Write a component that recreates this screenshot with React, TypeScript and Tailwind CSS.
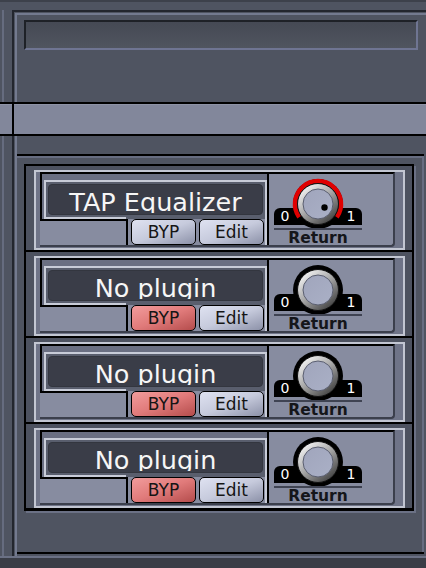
import React from 'react';

// ─── Data ───────────────────────────────────────────────────────────────────────

type Slot = { name: string; bypassed: boolean; active: boolean };

const SLOTS: Slot[] = [
  { name: 'TAP Equalizer', bypassed: false, active: true },
  { name: 'No plugin', bypassed: true, active: false },
  { name: 'No plugin', bypassed: true, active: false },
  { name: 'No plugin', bypassed: true, active: false },
];

// ─── Knob ───────────────────────────────────────────────────────────────────────

function Knob({ active }: { active: boolean }) {
  // value arc from -125deg to +125deg around (44, 26)
  const arc = 'M25.16 39.19 A23 23 0 1 1 62.84 39.19';
  return (
    <svg width="88" height="52" viewBox="0 0 88 52" className="block">
      <defs>
        <linearGradient id="knobRing" x1="0.15" y1="0.1" x2="0.85" y2="0.95">
          <stop offset="0" stopColor="#f2f2f2" />
          <stop offset="0.45" stopColor="#a9a9a9" />
          <stop offset="1" stopColor="#3c3c3c" />
        </linearGradient>
        <linearGradient id="knobFace" x1="0" y1="0" x2="1" y2="1">
          <stop offset="0" stopColor="#a0a5bc" />
          <stop offset="1" stopColor="#aab0c6" />
        </linearGradient>
      </defs>
      <path d="M0 36 a6 6 0 0 1 6 -6 H82 a6 6 0 0 1 6 6 V47 H0 Z" fill="#000" />
      <circle cx="44" cy="26" r="25" fill="#000" />
      {active && <path d={arc} stroke="#e00000" strokeWidth="4.5" fill="none" />}
      <circle cx="44" cy="26" r="20.5" fill="url(#knobRing)" stroke="#111" strokeWidth="1" />
      <circle cx="44" cy="26" r="15" fill="url(#knobFace)" stroke="#5b5f70" strokeWidth="1" />
      {active && <circle cx="50.5" cy="29.5" r="3.2" fill="#000" />}
      <text x="11" y="43" fill="#fff" fontSize="14" textAnchor="middle" fontFamily="DejaVu Sans">0</text>
      <text x="77" y="43" fill="#fff" fontSize="14" textAnchor="middle" fontFamily="DejaVu Sans">1</text>
      <rect x="0" y="50" width="88" height="2" fill="#3f4352" />
    </svg>
  );
}

// ─── Plugin row ─────────────────────────────────────────────────────────────────

const BTN = 'w-[65px] h-[26px] rounded-[5px] border border-black bg-gradient-to-br flex items-center justify-center text-[17px] leading-[17px] text-[#151515]';

function PluginRow({ slot }: { slot: Slot }) {
  return (
    <div className="h-[80px] border-2 border-[#c2c6d2] bg-[#6f7488] pl-[4px] pr-[8px] pb-px">
      <div className="h-full flex border-t-2 border-r-2 border-b-2 border-t-black border-r-[#3b3f4c] border-b-[#3b3f4c] rounded-br-[4px] bg-[#878ca0]">
        {/* name + buttons */}
        <div className="w-[229px] shrink-0 flex flex-col border-r-2 border-black">
          <div className="h-[45px] border-l-2 border-black bg-[#6a6f82] pl-[2px] pt-[6px]">
            <div className="h-[39px] border-t-2 border-l-2 border-r-2 border-[#c8ccd8] bg-[#595e6d]">
              <div className="mx-[2px] mt-[2px] h-[31px] rounded-[4px] bg-[#3a3d48] border border-[#33363f]">
                <div className="h-[28px] overflow-hidden">
                  <div className="pt-[2px] text-center text-[25.5px] leading-[31px] text-[#f6f6f6] whitespace-nowrap">
                    {slot.name}
                  </div>
                </div>
              </div>
              <div className="mt-[2px] w-[80px] h-[2px] bg-[#c8ccd8]" />
            </div>
          </div>
          <div className="h-[26px] flex">
            <div className="w-[86px] border-t-2 border-black" />
            <div className="w-[141px] border-l-2 border-black border-r-2 border-r-[#c8ccd8] pl-[3px] flex gap-[3px]">
              <div
                className={
                  slot.bypassed
                    ? `${BTN} from-[#f29c9c] via-[#e07a7a] to-[#b44c4c]`
                    : `${BTN} from-[#dfe2f1] via-[#c6cadc] to-[#8c91a8]`
                }
              >
                BYP
              </div>
              <div className={`${BTN} from-[#dfe2f1] via-[#c6cadc] to-[#8c91a8]`}>Edit</div>
            </div>
          </div>
        </div>

        {/* return knob */}
        <div className="flex-1 pl-[5px] pt-[4px]">
          <Knob active={slot.active} />
          <div className="w-[88px] pt-[1px] text-center text-[15.5px] leading-[15px] font-bold text-[#15161a]">
            Return
          </div>
        </div>
      </div>
    </div>
  );
}

// ─── App ────────────────────────────────────────────────────────────────────────

export default function App() {
  return (
    <div className="w-[426px] h-[568px] overflow-hidden bg-[#4f5461] flex flex-col font-['DejaVu_Sans',sans-serif]">
      <div className="h-[2px] shrink-0 bg-[#3d414b]" />

      {/* upper pane */}
      <div className="h-[100px] shrink-0 flex">
        <div className="w-[12px] shrink-0 pt-[8px] pl-[2px]">
          <div className="w-[2px] h-full bg-[#666c7f]" />
        </div>
        <div className="flex-1 mt-[8px] border-l-2 border-t-2 border-[#23262e] pl-px pt-px">
          <div className="h-full border-l-2 border-t-2 border-[#737a8f] pl-[7px] pt-[5px]">
            <div className="w-[394px] h-[30px] border-2 border-t-[#1e2127] border-l-[#1e2127] border-b-[#6f7592] border-r-[#6f7592] bg-gradient-to-b from-[#454954] to-[#50555f]" />
          </div>
        </div>
      </div>

      {/* divider band */}
      <div className="h-[34px] shrink-0 flex border-y-2 border-black bg-[#82879b]">
        <div className="w-[12px] border-t border-[#8e93a6]" />
        <div className="w-[2px] bg-black" />
        <div className="flex-1 border-t border-[#8e93a6]" />
      </div>

      {/* lower pane */}
      <div className="h-[420px] shrink-0 flex">
        <div className="w-[12px] shrink-0 pl-[2px]">
          <div className="w-[2px] h-full bg-[#666c7f]" />
        </div>
        <div className="flex-1 border-l-2 border-[#23262e] pl-px">
          <div className="h-full border-l-2 border-[#737a8f] pt-[18px]">
            <div className="w-[407px] h-[400px] border-y-2 border-black">
              <div className="h-full border-t-2 border-r-2 border-[#676d81] pl-[7px] pt-[6px]">
                <div className="w-[390px] border-t-2 border-x-2 border-b border-black bg-[#4d5260] shadow-[2px_2px_0_#6b7185]">
                  {SLOTS.map((slot, i) => (
                    <div key={i} className="pt-[4px] pl-[8px] pr-[7px] border-b-2 border-black">
                      <PluginRow slot={slot} />
                    </div>
                  ))}
                </div>
              </div>
            </div>
          </div>
        </div>
      </div>

      <div className="h-[2px] shrink-0 bg-[#6b7185]" />
      <div className="flex-1 bg-[#3a3d46]" />
    </div>
  );
}
